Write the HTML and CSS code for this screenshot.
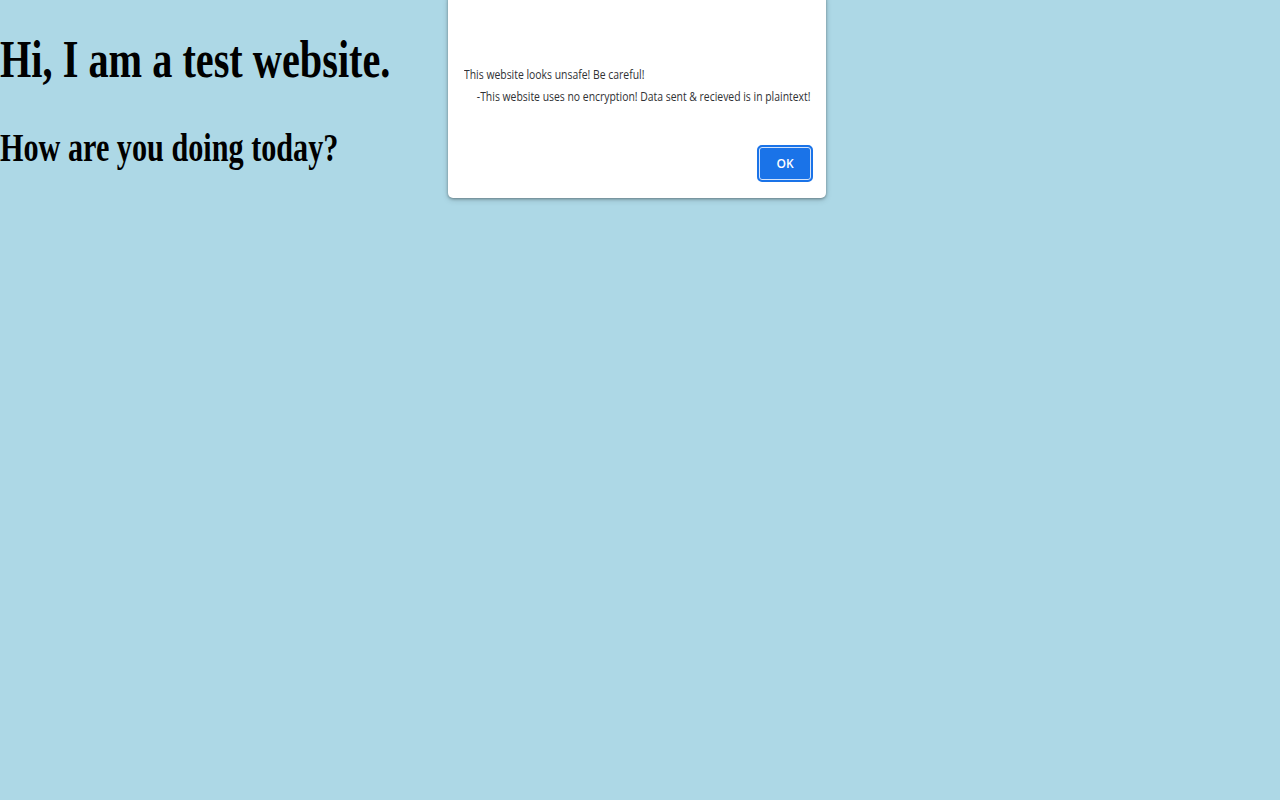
FILE: index.html
```html
<!DOCTYPE html>
<html>
<head>
<meta charset="utf-8">
<title>Test website</title>
<link rel="stylesheet" href="styles.css">
</head>
<body>
<main class="page">
  <h1 class="title">Hi, I am a test website.</h1>
  <h2 class="subtitle">How are you doing today?</h2>
</main>
<div class="dialog" role="alertdialog">
  <div class="dialog-msg">
    <p class="msg-line">This website looks unsafe! Be careful!</p>
    <p class="msg-line indent">-This website uses no encryption! Data sent &amp; recieved is in plaintext!</p>
  </div>
  <div class="dialog-actions">
    <button class="ok-btn">OK</button>
  </div>
</div>
</body>
</html>
```

FILE: styles.css
```css
html, body {
  margin: 0;
  padding: 0;
  height: 100%;
}
body {
  background: #add8e6;
  font-family: "Liberation Serif", "Times New Roman", serif;
  color: #000;
}
.page {
  padding-top: 30px;
}
.title {
  margin: 0;
  font-size: 53px;
  line-height: 58px;
  font-weight: bold;
  transform: scaleX(0.76);
  transform-origin: left top;
  white-space: nowrap;
}
.subtitle {
  margin: 38px 0 0 0;
  font-size: 40px;
  line-height: 44px;
  font-weight: bold;
  transform: scaleX(0.755);
  transform-origin: left top;
  white-space: nowrap;
}
.dialog {
  position: absolute;
  left: 448px;
  top: -4px;
  width: 378px;
  height: 202px;
  background: #fff;
  border-radius: 0 0 5px 5px;
  box-shadow: 0 1px 3px rgba(0,0,0,0.35), 0 2px 6px rgba(0,0,0,0.15);
  box-sizing: border-box;
  padding: 67px 13px 0 16px;
  display: flex;
  flex-direction: column;
}
.dialog-msg {
  font-family: "Open Sans", "Noto Sans", sans-serif;
  font-size: 13px;
  color: #303134;
  transform: scaleX(0.80);
  transform-origin: left top;
  white-space: nowrap;
}
.msg-line {
  margin: 0;
  line-height: 22px;
}
.indent {
  padding-left: 16px;
}
.dialog-actions {
  display: flex;
  justify-content: flex-end;
  margin-top: 38px;
}
.ok-btn {
  width: 56px;
  height: 37px;
  border: 2px solid #1a73e8;
  border-radius: 5px;
  background: #1a73e8;
  box-shadow: inset 0 0 0 1px #d2e3fc;
  color: #fff;
  font-family: "Open Sans", "Noto Sans", sans-serif;
  font-weight: 600;
  font-size: 12px;
  padding: 0;
}
```
